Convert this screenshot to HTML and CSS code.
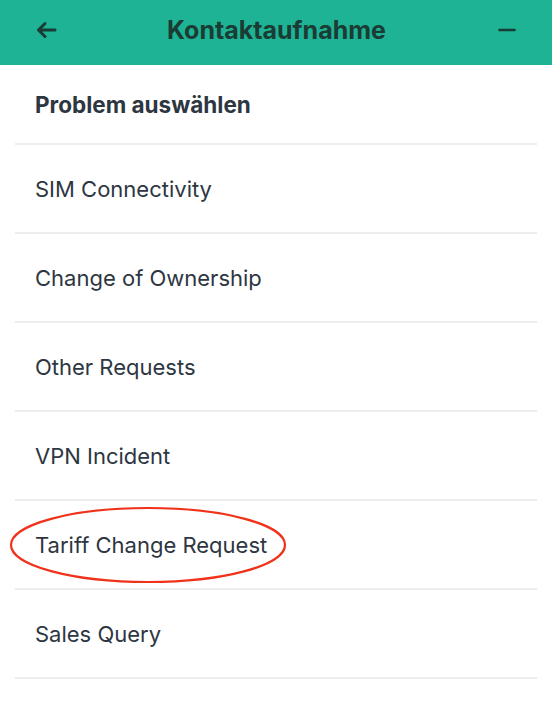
FILE: index.html
```html
<!DOCTYPE html>
<html lang="de">
<head>
<meta charset="utf-8">
<link rel="stylesheet" href="styles.css">
</head>
<body>
<div class="panel">
  <header class="topbar">
    <button class="icon-btn" aria-label="Zurück">
      <svg width="22" height="22" viewBox="0 0 22 22"><path d="M20 11H3.5M10 4.5L3.5 11L10 17.5" fill="none" stroke="#1b3b35" stroke-width="3" stroke-linecap="round" stroke-linejoin="round"/></svg>
    </button>
    <h1 class="title">Kontaktaufnahme</h1>
    <button class="icon-btn" aria-label="Minimieren">
      <svg width="22" height="22" viewBox="0 0 22 22"><path d="M3.5 11H18.5" fill="none" stroke="#1b3b35" stroke-width="2.6" stroke-linecap="round"/></svg>
    </button>
  </header>
  <ul class="list">
    <li class="row row-head">Problem auswählen</li>
    <li class="row">SIM Connectivity</li>
    <li class="row">Change of Ownership</li>
    <li class="row">Other Requests</li>
    <li class="row">VPN Incident</li>
    <li class="row marked">Tariff Change Request
      <svg class="ring" width="280" height="80" viewBox="0 0 280 80"><ellipse cx="140" cy="39" rx="137" ry="37" fill="none" stroke="#f0321a" stroke-width="2.2"/></svg>
    </li>
    <li class="row">Sales Query</li>
  </ul>
</div>
</body>
</html>
```
FILE: styles.css
```css
* { box-sizing: border-box; }
html, body { margin: 0; padding: 0; background: #ffffff; }
body { font-family: Inter, "Noto Sans", sans-serif; }
.panel { width: 552px; }
.topbar {
  height: 65px;
  background: #1db394;
  display: flex;
  align-items: center;
  justify-content: space-between;
  padding: 0 34px 5px 35px;
}
.icon-btn {
  background: none; border: 0; padding: 0; margin: 0;
  width: 22px; height: 22px; display: flex;
}
.title {
  margin: 0;
  font-size: 25px;
  font-weight: 700;
  color: #1b3b35;
  letter-spacing: 0;
}
.list { list-style: none; margin: 0; padding: 0 15px; }
.row {
  position: relative;
  height: 89px;
  display: flex;
  align-items: center;
  padding-left: 20px;
  border-bottom: 2px solid #ededed;
  font-size: 22px;
  color: #2d3641;
}
.row-head { height: 80px; font-weight: 700; font-size: 22.5px; }
.ring { position: absolute; left: -7px; top: 5px; }
```
